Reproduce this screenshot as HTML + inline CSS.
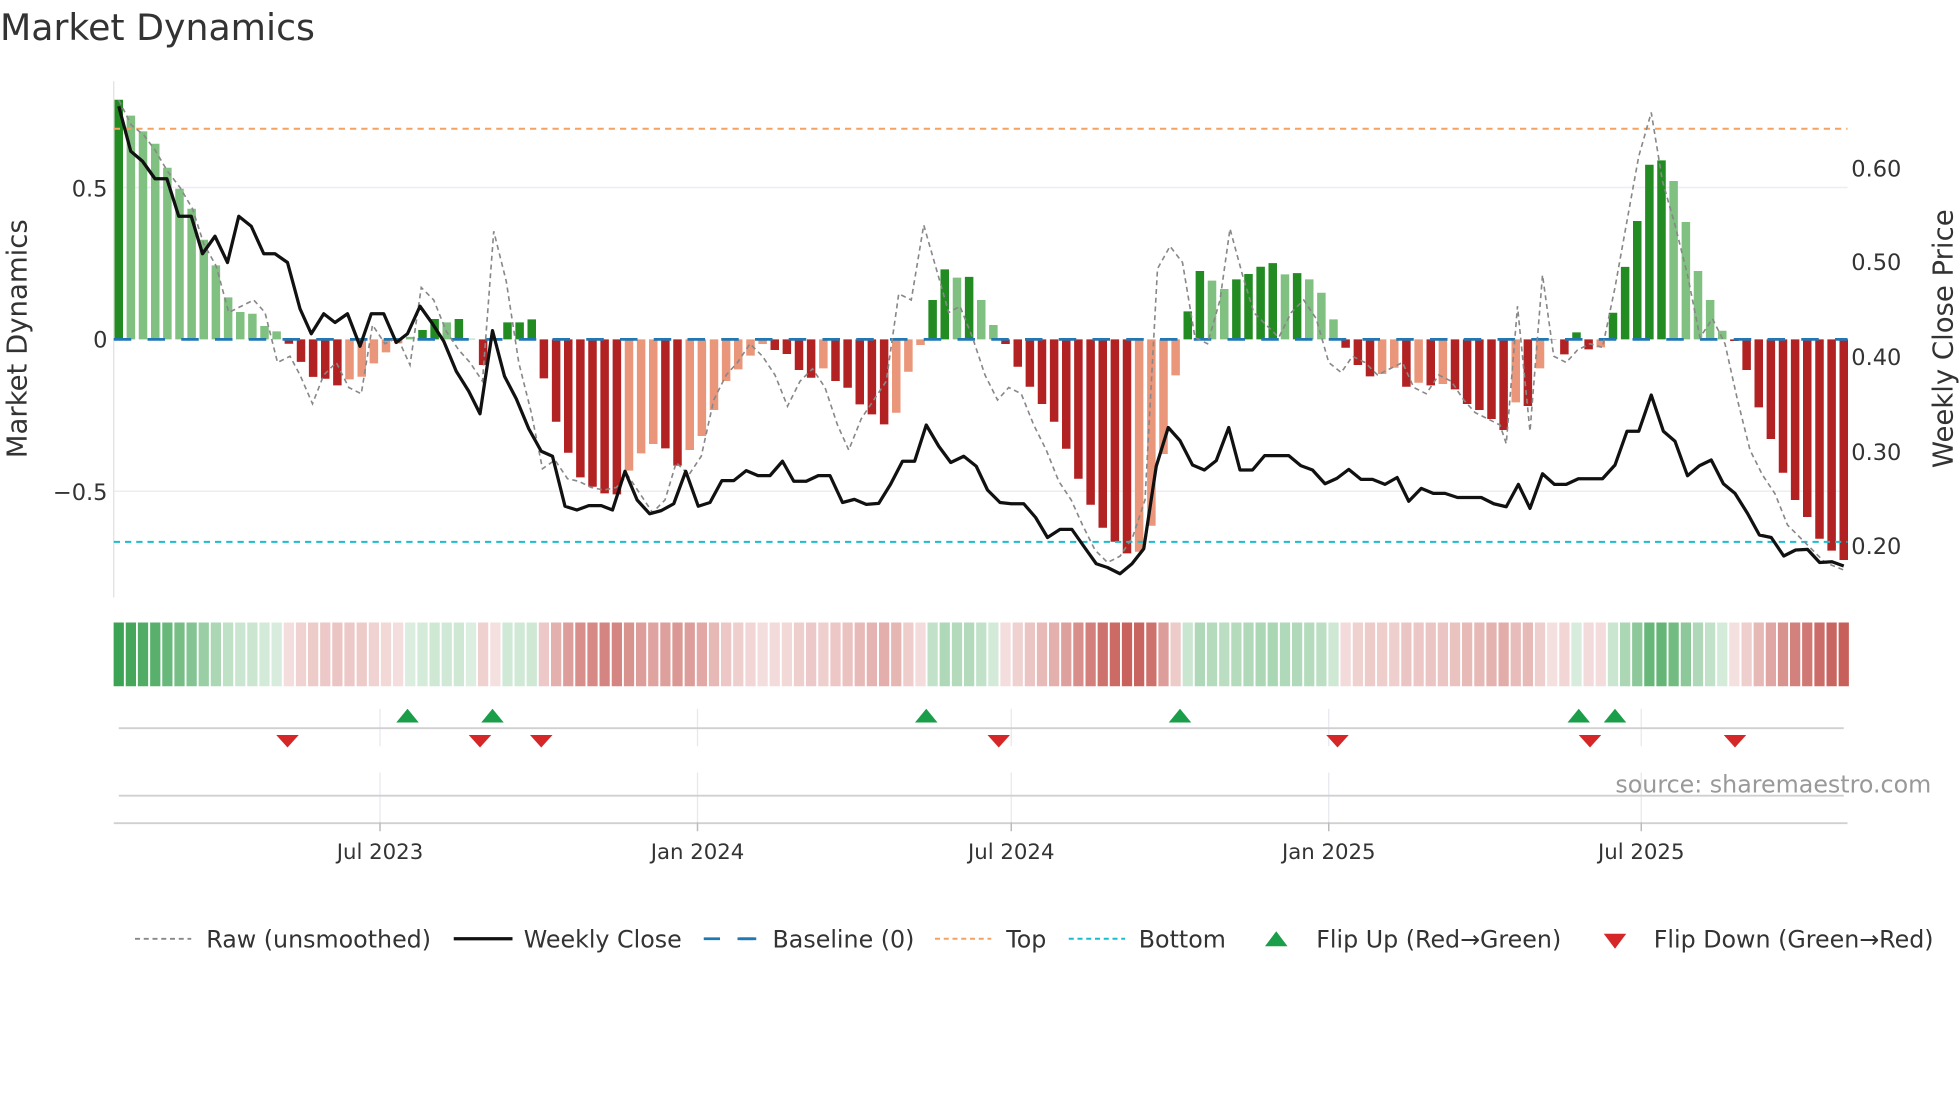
<!DOCTYPE html>
<html><head><meta charset="utf-8"><style>
html,body{margin:0;padding:0;background:#fff;}
svg{display:block;font-family:"DejaVu Sans","Liberation Sans",sans-serif;}
</style></head><body>
<svg id="c" width="1960" height="1102" viewBox="0 0 1568 881.6" xmlns="http://www.w3.org/2000/svg">
<rect width="1568" height="881.6" fill="#fff"/>
<text x="0" y="32" font-size="29" fill="#333">Market Dynamics</text>
<line x1="91" y1="150" x2="1478" y2="150" stroke="#eceef2" stroke-width="1.2"/>
<line x1="91" y1="393" x2="1478" y2="393" stroke="#eceef2" stroke-width="1.2"/>
<line x1="91" y1="65" x2="91" y2="478" stroke="#e0e0e0" stroke-width="1"/>
<g id="bars"></g>
<line x1="91" y1="103" x2="1478" y2="103" stroke="#f4a261" stroke-width="1.6" stroke-dasharray="5,4"/>
<line x1="91" y1="433.5" x2="1478" y2="433.5" stroke="#17becf" stroke-width="1.6" stroke-dasharray="5,4"/>
<line x1="91" y1="271.5" x2="1478" y2="271.5" stroke="#1f77b4" stroke-width="2.2" stroke-dasharray="14,13"/>
<polyline fill="none" stroke="#888" stroke-width="1.3" stroke-dasharray="4,3" points="95,80 105,100 115,108 124,120 134,137 144,150 154,167 163,195 173,213 183,250 193,245 203,240 212,250 222,290 232,285 240,300 250,323 259,300 269,290 279,310 289,315 298,260 308,275 318,270 328,292 337,230 347,240 357,265 367,280 376,290 386,305 395,185 405,225 415,290 425,330 434,375 444,368 454,383 463,385 473,390 483,392 493,390 502,380 512,395 522,410 532,400 541,370 551,380 561,365 571,320 581,300 590,290 600,275 610,285 620,300 630,325 640,305 650,295 660,310 670,340 679,360 689,335 699,320 709,305 719,235 729,240 739,180 749,215 759,250 768,245 778,270 788,300 798,320 807,310 817,315 827,340 837,360 847,385 857,400 866,420 876,440 886,450 896,445 906,430 916,400 926,215 936,197 946,210 956,270 966,275 976,240 984,183 994,220 1003,250 1013,260 1023,270 1033,250 1043,240 1053,255 1063,290 1073,298 1082,285 1092,290 1102,300 1112,295 1122,290 1131,310 1141,315 1151,300 1161,305 1171,320 1180,330 1190,335 1200,340 1205,355 1214,245 1224,345 1234,220 1243,285 1253,290 1262,280 1272,275 1282,278 1292,230 1301,180 1311,125 1321,90 1330,145 1340,180 1350,220 1360,270 1370,255 1380,275 1390,320 1400,360 1410,380 1420,395 1430,420 1440,430 1450,440 1460,450 1475,456"/>
<polyline fill="none" stroke="#111" stroke-width="2.6" stroke-linejoin="round" points="95,85 104.6,121 114,129 124,143 133.5,143 143,173 153,173 162,203 172,189 182,210 191,173 201,181 211,203 220,203 230,210 240,247 249,267 259,251 268,258 278,251 288,277 297,251 307,251 317,274 326,267 336,245 346,259 355,273 365,297 375,313 384,331 394,264.5 403.6,301 413,319 423,343 433,361 442,365 452,405 461.5,408 471,404.5 481,404.5 490,408 500,377 509.7,400 519.7,411 529,408.5 539,403 548.6,377 558.6,405 568,402 577.5,384.5 587,384.5 597,376.5 606.4,380.5 616,380.5 626,369 635,385 645,385 654.6,380.5 664,380.5 674,402 683.5,399.5 693,403.5 703,402.7 712.4,387.5 722,369 731.7,369 741,340 751,357 760.6,370 771,365 781,373 790,392 800,402 809,403 819,403 828.5,414 838,430 848,423.5 857.5,423.5 867,437 877,451 886,454 896,459 905.6,451 915,439 925,373 934.6,342 944,352.5 954,372 963.5,376 973,368.5 983,342 992,376 1002,376 1011.7,364.5 1021,364.5 1031,364.5 1040.6,372.5 1050,376 1060,387 1069.5,382.7 1079,375.5 1088.8,383.5 1098,383.5 1108,387.5 1117.7,382 1127,401 1137,390.7 1146.6,394.7 1156,394.7 1166,398 1175.5,398 1185,398 1195,403 1205,405.4 1214.7,387.5 1224,406.7 1234,379 1243.5,387.5 1253,387.5 1262.7,383 1272,383 1282,383 1292,372 1301.6,345 1311,345 1321,316 1330.7,345 1340,353 1350,380.6 1359.5,372.6 1369,368 1378.7,387 1388,394.7 1398,410.7 1407.5,428 1417,430 1427,444.8 1436.5,440 1446,439.5 1455.7,450 1465.6,449.4 1475,452.8"/>
<g font-size="18" fill="#333" text-anchor="end">
<text x="86" y="157">0.5</text>
<text x="86" y="278">0</text>
<text x="86" y="400">−0.5</text>
</g>
<text transform="translate(21,271) rotate(-90)" font-size="22" fill="#333" text-anchor="middle">Market Dynamics</text>
<g font-size="18" fill="#333">
<text x="1481" y="141">0.60</text>
<text x="1481" y="216">0.50</text>
<text x="1481" y="292">0.40</text>
<text x="1481" y="368">0.30</text>
<text x="1481" y="443">0.20</text>
</g>
<text transform="translate(1562,271) rotate(-90)" font-size="22" fill="#333" text-anchor="middle">Weekly Close Price</text>
<g id="strip"></g>
<g stroke="#e6e8ef" stroke-width="1">
<line x1="304" y1="567" x2="304" y2="597"/><line x1="558" y1="567" x2="558" y2="597"/><line x1="809" y1="567" x2="809" y2="597"/><line x1="1063" y1="567" x2="1063" y2="597"/><line x1="1313" y1="567" x2="1313" y2="597"/>
<line x1="304" y1="618" x2="304" y2="658"/><line x1="558" y1="618" x2="558" y2="658"/><line x1="809" y1="618" x2="809" y2="658"/><line x1="1063" y1="618" x2="1063" y2="658"/><line x1="1313" y1="618" x2="1313" y2="658"/>
</g>
<line x1="95" y1="582.5" x2="1475" y2="582.5" stroke="#d0d0d0" stroke-width="1.5"/>
<line x1="95" y1="636.5" x2="1475" y2="636.5" stroke="#d0d0d0" stroke-width="1.5"/>
<line x1="91" y1="658.5" x2="1478" y2="658.5" stroke="#d0d0d0" stroke-width="1.5"/>
<g stroke="#bbb" stroke-width="1.2">
<line x1="304" y1="658" x2="304" y2="665"/><line x1="558" y1="658" x2="558" y2="665"/><line x1="809" y1="658" x2="809" y2="665"/><line x1="1063" y1="658" x2="1063" y2="665"/><line x1="1313" y1="658" x2="1313" y2="665"/>
</g>
<g id="flips"></g>
<text x="1545" y="634" font-size="19" fill="#999" text-anchor="end">source: sharemaestro.com</text>
<g font-size="17" fill="#333" text-anchor="middle">
<text x="304" y="687">Jul 2023</text>
<text x="558" y="687">Jan 2024</text>
<text x="809" y="687">Jul 2024</text>
<text x="1063" y="687">Jan 2025</text>
<text x="1313" y="687">Jul 2025</text>
</g>
<g font-size="19" fill="#333">
<line x1="108" y1="751" x2="153" y2="751" stroke="#888" stroke-width="1.5" stroke-dasharray="4,3"/>
<text x="165" y="758">Raw (unsmoothed)</text>
<line x1="363" y1="751" x2="410" y2="751" stroke="#111" stroke-width="2.6"/>
<text x="419" y="758">Weekly Close</text>
<line x1="563" y1="751" x2="605" y2="751" stroke="#1f77b4" stroke-width="2.2" stroke-dasharray="13,14"/>
<line x1="592" y1="751" x2="605" y2="751" stroke="#1f77b4" stroke-width="2.2"/>
<text x="618" y="758">Baseline (0)</text>
<line x1="748" y1="751" x2="793" y2="751" stroke="#f4a261" stroke-width="1.6" stroke-dasharray="4,3"/>
<text x="805" y="758">Top</text>
<line x1="855" y1="751" x2="900" y2="751" stroke="#17becf" stroke-width="1.6" stroke-dasharray="4,3"/>
<text x="911" y="758">Bottom</text>
<polygon points="1012,757 1030,757 1021,745" fill="#1a9e4a"/>
<text x="1053" y="758">Flip Up (Red→Green)</text>
<polygon points="1283,747 1301,747 1292,759" fill="#d62728"/>
<text x="1323" y="758">Flip Down (Green→Red)</text>
</g>
</svg>
<script>
(function(){
var NS="http://www.w3.org/2000/svg";
function mk(parent,tag,attrs){var e=document.createElementNS(NS,tag);for(var k in attrs)e.setAttribute(k,attrs[k]);parent.appendChild(e);return e;}
var d=[["D",191.7],["L",179],["L",166.4],["L",156.5],["L",137.3],["L",120.5],["L",104.5],["L",79.7],["L",59.2],["L",33.6],["L",21.9],["L",20.5],["L",10.7],["L",6.4],["R",-3.5],["R",-18],["R",-30],["R",-31.5],["R",-36.8],["S",-32],["S",-29.9],["S",-19.2],["S",-10.4],["S",-3.2],["L",2],["D",7.5],["D",16.3],["L",13.6],["D",16.3],["L",0.5],["R",-20.5],["S",-1],["D",13.6],["D",13.6],["D",16],["R",-31.2],["R",-65.9],["R",-90.7],["R",-110.4],["R",-117.9],["R",-123.2],["R",-124],["S",-105],["S",-91.2],["S",-83.7],["R",-87.2],["R",-101],["S",-88.5],["S",-77.3],["S",-56.5],["S",-33.3],["S",-24],["S",-13],["S",-3.7],["R",-8.5],["R",-11.7],["R",-24.5],["R",-30.7],["S",-23.2],["R",-33.3],["R",-38.7],["R",-52],["R",-60],["R",-68],["S",-58.7],["S",-25.9],["S",-4.5],["D",31.5],["D",56],["L",49.4],["D",50],["L",31.5],["L",11.5],["R",-3.7],["R",-21.9],["R",-37.9],["R",-51.7],["R",-65.9],["R",-87.5],["R",-111.5],["R",-132.3],["R",-150.7],["R",-161.9],["R",-171.2],["S",-169.9],["S",-149.1],["S",-91.7],["S",-28.8],["D",22.4],["D",54.7],["L",47],["L",40.3],["D",48],["D",52.3],["D",58.1],["D",61],["L",52],["D",53],["L",48],["L",37.3],["L",16],["R",-6.7],["R",-20.5],["R",-29.6],["S",-27.7],["S",-22.7],["R",-37.9],["S",-34.7],["R",-36.8],["S",-35.7],["R",-40],["R",-51.7],["R",-56.5],["R",-63.7],["R",-72.5],["S",-50.4],["R",-53.3],["S",-23.2],["S",-0.3],["R",-12],["D",5.6],["R",-8],["S",-6.4],["D",21.3],["D",58],["D",94.7],["D",139.7],["D",143.2],["L",126.7],["L",93.9],["L",54.7],["L",31.5],["L",6.9],["R",-1.3],["R",-24.5],["R",-54.4],["R",-79.7],["R",-106.7],["R",-128.5],["R",-142.1],["R",-159.5],["R",-169],["R",-176.5]];
var col={D:"#228b22",L:"#80c080",R:"#b22222",S:"#e9967a"};
var bars=document.getElementById("bars"),strip=document.getElementById("strip"),flips=document.getElementById("flips");
var n=d.length,step=1380/(n-1);
for(var i=0;i<n;i++){
 var x=95+step*i,v=d[i][1],y0=271.5,h=Math.abs(v),yy=v>0?y0-v:y0;
 mk(bars,"rect",{x:(x-3.4).toFixed(1),y:yy.toFixed(1),width:"6.8",height:Math.max(h,0.5).toFixed(1),fill:col[d[i][0]]});
 var a=0.16+0.72*Math.min(1,h/190);
 mk(strip,"rect",{x:(x-4.1).toFixed(1),y:"498",width:"8.2",height:"51",fill:(v>=0?"rgb(34,150,60)":"rgb(188,62,56)"),"fill-opacity":a.toFixed(2)});
}
var up=[326,394,741,944,1263,1292],dn=[230,384,433,799,1070,1272,1388];
up.forEach(function(x){mk(flips,"polygon",{points:(x-9)+",578 "+(x+9)+",578 "+x+",567",fill:"#1a9e4a"});});
dn.forEach(function(x){mk(flips,"polygon",{points:(x-9)+",588 "+(x+9)+",588 "+x+",598",fill:"#d62728"});});
})();
</script>
</body></html>
